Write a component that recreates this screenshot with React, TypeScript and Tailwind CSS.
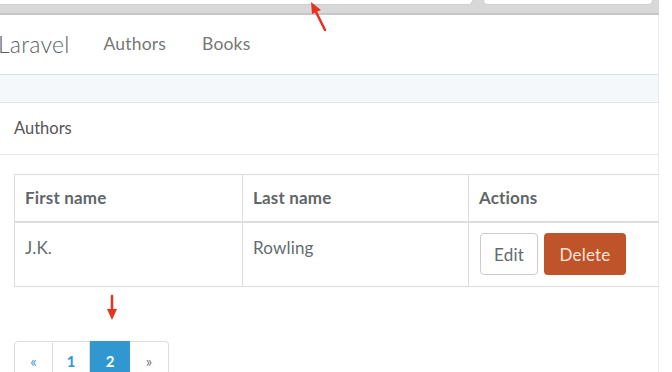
import React from 'react';

const App: React.FC = () => {
  return (
    <div className="relative w-[672px] h-[372px] overflow-hidden bg-white text-[#636b6f] font-['Lato','Liberation_Sans',sans-serif]">
      {/* Browser chrome */}
      <div className="flex w-[659px] h-[15px] gap-[10px] bg-[#d8d8d8] border-b-2 border-[#c6c6c6]">
        <div className="w-[473px] h-[5px] bg-white rounded-br-md border-r border-b border-[#cfcfcf]" />
        <div className="w-[170px] h-[5px] bg-white rounded-b-md border border-t-0 border-[#cfcfcf]" />
      </div>

      <div className="w-[659px] border-r border-[#e8edf0]">
        {/* Navbar */}
        <nav className="flex items-center h-[60px] border-b border-[#d3e0e9]">
          <span className="ml-[-2px] text-[23px] font-light tracking-[0.01em] text-[#5c6266]">Laravel</span>
          <span className="ml-[34px] text-[17.5px] tracking-[0.01em] text-[#777]">Authors</span>
          <span className="ml-[36px] text-[17.5px] tracking-[0.01em] text-[#777]">Books</span>
        </nav>

        <div className="h-[28px] bg-[#f5f8fa] border-b border-[#dde6ec]" />

        {/* Panel heading */}
        <div className="h-[52px] flex items-center px-[14px] border-b border-[#e2e6e8] text-[16.5px] text-[#555]">
          Authors
        </div>

        {/* Table */}
        <div className="pt-[19px] pl-[14px]">
          <table className="w-[645px] border-collapse text-[17px] tracking-[0.01em]">
            <thead>
              <tr className="h-[47px]">
                <th className="w-[228px] border border-[#dddddd] border-b-2 px-[10px] text-left font-bold text-[#5f6669]">First name</th>
                <th className="w-[226px] border border-[#dddddd] border-b-2 px-[10px] text-left font-bold text-[#5f6669]">Last name</th>
                <th className="border border-[#dddddd] border-r-0 border-b-2 px-[10px] text-left font-bold text-[#5f6669]">Actions</th>
              </tr>
            </thead>
            <tbody>
              <tr className="h-[65px]">
                <td className="border border-[#dddddd] px-[10px] pt-[12px] align-top">J.K.</td>
                <td className="border border-[#dddddd] px-[10px] pt-[12px] align-top">Rowling</td>
                <td className="border border-[#dddddd] border-r-0 px-[11px] align-middle">
                  <div className="flex gap-[6px]">
                    <button className="w-[58px] h-[42px] rounded-[4px] border border-[#ccc] bg-white text-[17px] text-[#636b6f]">Edit</button>
                    <button className="w-[82px] h-[42px] rounded-[4px] bg-[#bf5329] text-[17px] text-[#fbe3d8]">Delete</button>
                  </div>
                </td>
              </tr>
            </tbody>
          </table>
        </div>

        {/* Pagination */}
        <div className="pt-[54px] pl-[14px]">
          <div className="inline-flex h-[40px] text-[15px] font-bold">
            <span className="w-[39px] flex items-center justify-center border border-[#ddd] rounded-tl-[4px] text-[#3097d1] font-normal">«</span>
            <span className="w-[37px] flex items-center justify-center border border-l-0 border-[#ddd] text-[#3097d1]">1</span>
            <span className="w-[40px] flex items-center justify-center bg-[#3097d1] text-white">2</span>
            <span className="w-[39px] flex items-center justify-center border border-l-0 border-[#ddd] rounded-tr-[4px] text-[#777] font-normal">»</span>
          </div>
        </div>
      </div>

      {/* Annotation arrows */}
      <svg className="absolute left-[305px] top-0" width="30" height="34" viewBox="0 0 30 34">
        <line x1="20" y1="30" x2="10" y2="10" stroke="#e8321e" strokeWidth="2.5" strokeLinecap="round" />
        <polygon points="6,2 16,10 7,14" fill="#e8321e" />
      </svg>
      <svg className="absolute left-[106px] top-[294px]" width="12" height="28" viewBox="0 0 12 28">
        <line x1="6" y1="2" x2="6" y2="18" stroke="#e8321e" strokeWidth="2.5" strokeLinecap="round" />
        <polygon points="1,15 11,15 6,26" fill="#e8321e" />
      </svg>
    </div>
  );
};

export default App;
